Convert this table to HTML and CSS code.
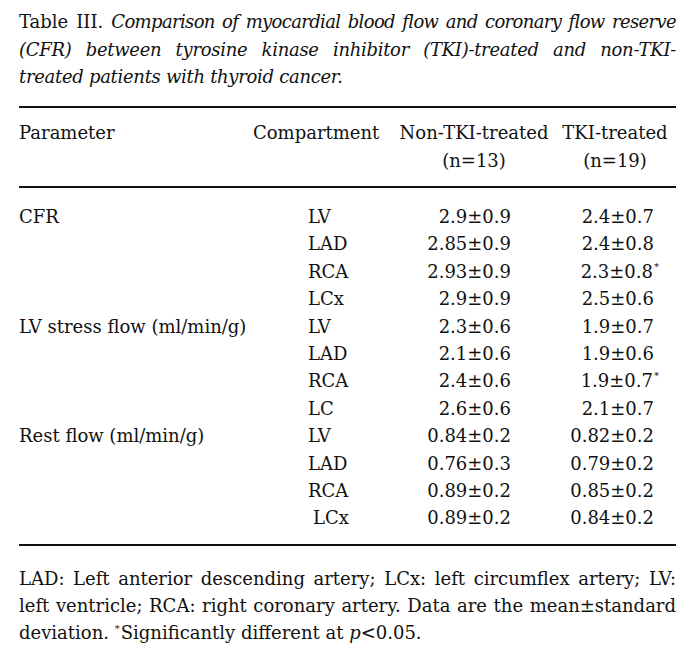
FILE: index.html
```html
<!DOCTYPE html>
<html lang="en">
<head>
<meta charset="utf-8">
<title>Table III</title>
<link rel="stylesheet" href="styles.css">
</head>
<body>
<div class="page">
  <p class="caption">
    <span class="line just tight">Table III. <em>Comparison of myocardial blood flow and coronary flow reserve</em></span>
    <span class="line just"><em>(CFR) between tyrosine kinase inhibitor (TKI)-treated and non-TKI-</em></span>
    <span class="line"><em>treated patients with thyroid cancer.</em></span>
  </p>
  <table class="data">
    <colgroup>
      <col class="c-param">
      <col class="c-comp">
      <col class="c-non">
      <col class="c-tki">
    </colgroup>
    <thead>
      <tr>
        <th class="h-param">Parameter</th>
        <th class="h-comp">Compartment</th>
        <th class="h-non">Non-TKI-treated<br>(n=13)</th>
        <th class="h-tki">TKI-treated<br>(n=19)</th>
      </tr>
    </thead>
    <tbody>
      <tr class="first"><td class="param">CFR</td><td class="comp">LV</td><td class="num non">2.9±0.9</td><td class="num tki">2.4±0.7</td></tr>
      <tr><td class="param"></td><td class="comp">LAD</td><td class="num non">2.85±0.9</td><td class="num tki">2.4±0.8</td></tr>
      <tr><td class="param"></td><td class="comp">RCA</td><td class="num non">2.93±0.9</td><td class="num tki">2.3±0.8<sup class="sig">*</sup></td></tr>
      <tr><td class="param"></td><td class="comp">LCx</td><td class="num non">2.9±0.9</td><td class="num tki">2.5±0.6</td></tr>
      <tr><td class="param">LV stress flow (ml/min/g)</td><td class="comp">LV</td><td class="num non">2.3±0.6</td><td class="num tki">1.9±0.7</td></tr>
      <tr><td class="param"></td><td class="comp">LAD</td><td class="num non">2.1±0.6</td><td class="num tki">1.9±0.6</td></tr>
      <tr><td class="param"></td><td class="comp">RCA</td><td class="num non">2.4±0.6</td><td class="num tki">1.9±0.7<sup class="sig">*</sup></td></tr>
      <tr><td class="param"></td><td class="comp">LC</td><td class="num non">2.6±0.6</td><td class="num tki">2.1±0.7</td></tr>
      <tr><td class="param">Rest flow (ml/min/g)</td><td class="comp">LV</td><td class="num non">0.84±0.2</td><td class="num tki">0.82±0.2</td></tr>
      <tr><td class="param"></td><td class="comp">LAD</td><td class="num non">0.76±0.3</td><td class="num tki">0.79±0.2</td></tr>
      <tr><td class="param"></td><td class="comp">RCA</td><td class="num non">0.89±0.2</td><td class="num tki">0.85±0.2</td></tr>
      <tr class="last"><td class="param"></td><td class="comp indent">LCx</td><td class="num non">0.89±0.2</td><td class="num tki">0.84±0.2</td></tr>
    </tbody>
  </table>
  <p class="note">
    <span class="line just">LAD: Left anterior descending artery; LCx: left circumflex artery; LV:</span>
    <span class="line just">left ventricle; RCA: right coronary artery. Data are the mean±standard</span>
    <span class="line">deviation. <sup class="fn">*</sup>Significantly different at <em>p</em>&lt;0.05.</span>
  </p>
</div>
</body>
</html>
```

FILE: styles.css
```css
html, body {
  background: #ffffff;
}

body {
  margin: 8px 14px 0 19px;
  font-family: "DejaVu Serif", "Liberation Serif", serif;
  font-size: 18px;
  color: #111111;
}

.caption {
  margin: 0;
  line-height: 27.5px;
}

.line {
  display: block;
  white-space: nowrap;
}

.just {
  white-space: normal;
  text-align: justify;
  text-align-last: justify;
}

.caption em {
  font-style: italic;
  letter-spacing: -0.3px;
}

.caption .tight em {
  letter-spacing: -0.65px;
}

.data {
  width: 100%;
  margin-top: 15.5px;
  border-collapse: collapse;
  table-layout: fixed;
  border-top: 2px solid #111111;
  border-bottom: 2px solid #111111;
}

.c-param { width: 234px; }
.c-comp { width: 137px; }
.c-non { width: 164px; }
.c-tki { width: auto; }

.data thead tr {
  border-bottom: 2px solid #111111;
}

.data th {
  font-weight: normal;
  line-height: 27.5px;
  padding: 11px 0 12px;
  vertical-align: top;
  white-space: nowrap;
}

.h-param {
  text-align: left;
}

.h-comp {
  text-align: left;
}

.h-non {
  text-align: center;
  padding-left: 4px !important;
}

.h-tki {
  text-align: center;
}

.data td {
  padding: 0;
  line-height: 27.4px;
  white-space: nowrap;
  vertical-align: top;
}

.data tr.first td {
  padding-top: 15px;
}

.data tr.last td {
  padding-bottom: 12px;
}

.param {
  text-align: left;
}

.comp {
  padding-left: 55px !important;
  text-align: left;
}

.comp.indent {
  padding-left: 60px !important;
}

.num {
  text-align: right;
}

.num.non {
  padding-right: 43px !important;
}

.num.tki {
  padding-right: 22px !important;
}

.sig {
  display: inline-block;
  width: 0;
  position: relative;
  top: -8px;
  vertical-align: baseline;
  font-size: 10px;
  line-height: 0;
  padding-left: 1px;
}

.note {
  margin: 20.5px 0 0;
  line-height: 26.7px;
}

.fn {
  position: relative;
  top: -7px;
  vertical-align: baseline;
  font-size: 10px;
  line-height: 0;
  margin-right: 1px;
}

.note em {
  font-style: italic;
}
```
